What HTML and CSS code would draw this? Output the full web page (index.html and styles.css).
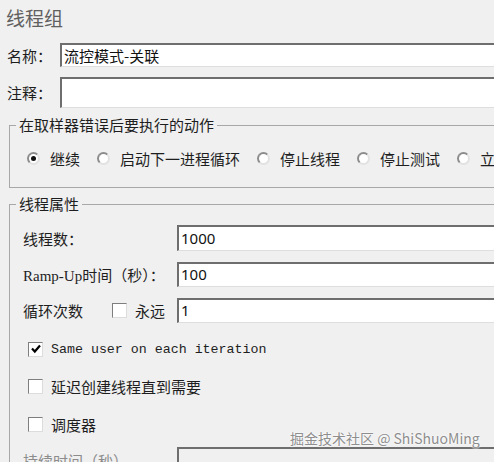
FILE: index.html
```html
<!DOCTYPE html>
<html lang="zh">
<head>
<meta charset="utf-8">
<title>线程组</title>
<link rel="stylesheet" href="styles.css">
</head>
<body>
<div class="app">
  <h1 class="title">线程组</h1>

  <div class="field-row name-row">
    <span class="field-label">名称：</span>
    <div class="input">流控模式-关联</div>
  </div>
  <div class="field-row comment-row">
    <span class="field-label">注释：</span>
    <div class="input tall"></div>
  </div>

  <fieldset class="group err-group">
    <legend>在取样器错误后要执行的动作</legend>
    <div class="radios">
      <span class="radio-item"><span class="radio checked"></span>继续</span>
      <span class="radio-item"><span class="radio"></span>启动下一进程循环</span>
      <span class="radio-item"><span class="radio"></span>停止线程</span>
      <span class="radio-item"><span class="radio"></span>停止测试</span>
      <span class="radio-item"><span class="radio"></span>立即停止测试</span>
    </div>
  </fieldset>

  <fieldset class="group props">
    <legend>线程属性</legend>
    <div class="prop-row first">
      <span class="prop-label">线程数：</span>
      <div class="input prop-input">1000</div>
    </div>
    <div class="prop-row">
      <span class="prop-label"><span class="latin">Ramp-Up</span>时间（秒）：</span>
      <div class="input prop-input short">100</div>
    </div>
    <div class="prop-row">
      <span class="prop-label loop-label">
        <span class="loop-text">循环次数</span>
        <span class="checkbox"></span>
        <span>永远</span>
      </span>
      <div class="input prop-input short">1</div>
    </div>
    <div class="check-row same-user">
      <span class="checkbox checked"><svg viewBox="0 0 12 12" width="12" height="12"><path d="M2 5.5 L4.8 8.5 L10 2.5" fill="none" stroke="#000" stroke-width="2.2"/></svg></span>
      <span class="mono">Same user on each iteration</span>
    </div>
    <div class="check-row delay">
      <span class="checkbox"></span>
      <span>延迟创建线程直到需要</span>
    </div>
    <div class="check-row sched">
      <span class="checkbox"></span>
      <span>调度器</span>
    </div>
    <div class="prop-row duration">
      <span class="prop-label disabled">持续时间（秒）</span>
      <div class="input prop-input disabled-input"></div>
    </div>
  </fieldset>

  <div class="watermark">掘金技术社区 @ ShiShuoMing</div>
</div>
</body>
</html>
```

FILE: styles.css
```css
html, body {
  margin: 0;
  padding: 0;
}
body {
  width: 494px;
  height: 462px;
  overflow: hidden;
  background: #f0f0f0;
  font-family: "Noto Sans CJK SC", "Noto Sans", sans-serif;
  font-size: 15px;
  color: #1e1e1e;
}
.app {
  position: relative;
  width: 494px;
  height: 462px;
  overflow: hidden;
}
.title {
  margin: 0;
  height: 36px;
  line-height: 36px;
  padding-left: 6px;
  font-size: 19px;
  font-weight: normal;
  color: #606060;
}
.field-row {
  display: flex;
  align-items: center;
}
.field-label {
  width: 60px;
  padding-left: 7px;
  box-sizing: border-box;
  flex: none;
}
.name-row {
  margin-top: 7px;
}
.comment-row {
  margin-top: 10px;
}
.input {
  flex: none;
  width: 450px;
  height: 24px;
  box-sizing: border-box;
  background: #fff;
  border-top: 2px solid #6e6e6e;
  border-left: 2px solid #6e6e6e;
  border-bottom: 1px solid #dedede;
  border-right: 1px solid #dedede;
  padding-left: 2px;
  line-height: 21px;
  font-size: 15px;
  color: #111;
  white-space: nowrap;
}
.input.tall {
  height: 31px;
}

.group {
  border: 1px solid #a8a8a8;
  margin: 0 -30px 0 9px;
  padding: 0;
  min-width: 0;
}
.group legend {
  padding: 0 3px;
  line-height: 20px;
  font-size: 15px;
  color: #1e1e1e;
}
.err-group {
  margin-top: 7px;
  padding: 13px 0 19px 17px;
}
.err-group legend {
  margin-left: -11px;
}
.radios {
  display: flex;
  align-items: center;
  height: 20px;
  white-space: nowrap;
}
.radio-item {
  display: flex;
  align-items: center;
  gap: 10px;
  margin-right: 17px;
  flex: none;
}
.radio {
  width: 13px;
  height: 13px;
  box-sizing: border-box;
  border-radius: 50%;
  border: 2px solid;
  border-color: #8c8c8c #e2e2e2 #e2e2e2 #8c8c8c;
  background: #fff;
  display: flex;
  align-items: center;
  justify-content: center;
  flex: none;
}
.radio.checked::after {
  content: "";
  width: 5px;
  height: 5px;
  border-radius: 50%;
  background: #111;
}

.props {
  margin-top: 6px;
  padding: 11px 0 40px 13px;
}
.props legend {
  margin-left: -7px;
}
.prop-row {
  display: flex;
  align-items: center;
  margin-top: 11px;
}
.prop-row.first {
  margin-top: 0;
}
.prop-label {
  width: 154px;
  flex: none;
  white-space: nowrap;
}
.prop-input {
  width: 340px;
  height: 26px;
  line-height: 22px;
  padding-left: 2px;
  font-family: "Noto Sans", sans-serif;
}
.prop-input.short {
  height: 25px;
  line-height: 21px;
}
.latin {
  font-family: "Liberation Serif", serif;
  font-size: 15px;
}
.loop-label {
  display: flex;
  align-items: center;
}
.loop-text {
  width: 89px;
  flex: none;
}
.loop-label .checkbox {
  margin-right: 8px;
}
.checkbox {
  width: 15px;
  height: 15px;
  box-sizing: border-box;
  border: 1px solid;
  border-color: #7e7e7e #dcdcdc #dcdcdc #7e7e7e;
  background: #fff;
  display: inline-flex;
  align-items: center;
  justify-content: center;
  flex: none;
}
.check-row {
  display: flex;
  align-items: center;
  gap: 8px;
  height: 20px;
  padding-left: 5px;
}
.same-user {
  margin-top: 16px;
}
.delay {
  margin-top: 17px;
}
.sched {
  margin-top: 18px;
}
.mono {
  font-family: "Liberation Mono", monospace;
  font-size: 13.3px;
  color: #1e1e1e;
}
.duration {
  margin-top: 13px;
}
.disabled {
  color: #8c8c8c;
}
.disabled-input {
  background: #f0f0f0;
}
.watermark {
  position: absolute;
  left: 290px;
  top: 428px;
  font-size: 14px;
  color: #8e8e8e;
  text-shadow: 0 0 2px #fff, 0 0 2px #fff;
  white-space: nowrap;
}
```
